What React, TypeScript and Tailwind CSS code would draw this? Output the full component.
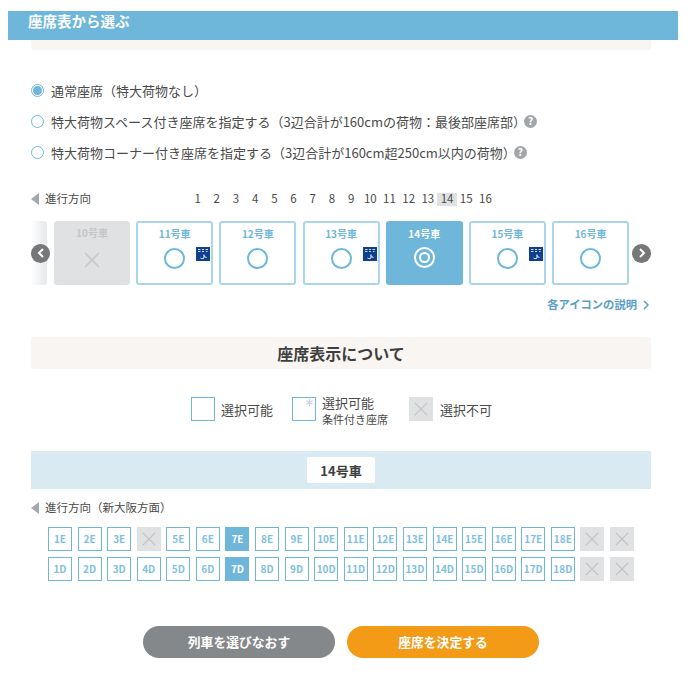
const font = '"Noto Sans CJK JP", "Noto Sans", sans-serif';

function Tri() {
  return <span className="inline-block w-0 h-0 border-y-[6px] border-y-transparent border-r-[8px] border-r-[#a4a8ab]" />;
}
function Help() {
  return (
    <span className="ml-[-2px] w-[13px] h-[13px] rounded-full bg-[#a3a6a8] text-white text-[10px] font-bold flex items-center justify-center leading-none">?</span>
  );
}
function Radio({ on, children }: { on?: boolean; children: React.ReactNode }) {
  return (
    <div className="flex items-center h-[20px]">
      <span className="w-[13px] h-[13px] rounded-full border border-[#6eb7da] flex items-center justify-center shrink-0 mr-[7px]">
        {on && <span className="w-[9px] h-[9px] rounded-full bg-[#6eb7da]" />}
      </span>
      {children}
    </div>
  );
}
function Cross({ s = 16, c = "#c4c6c8", w = 1.6 }: { s?: number; c?: string; w?: number }) {
  return (
    <svg width={s} height={s} viewBox="0 0 16 16">
      <path d="M1 1L15 15M15 1L1 15" stroke={c} strokeWidth={w} fill="none" />
    </svg>
  );
}
function Luggage() {
  return (
    <svg width="14" height="14" viewBox="0 0 14 14" className="absolute left-[58px] top-[24px]">
      <rect width="14" height="14" fill="#0f3f8f" />
      <path d="M2 2.5h2.5M2 4.5h2.5M6 2.5h2M6 4.5h2M9.5 2.5h2.5M10 4.5h1.5" stroke="#fff" strokeWidth="1" opacity="0.8" />
      <path d="M8 7.5v3.5M8 11c-1 .8-2.5.8-3.5 0M8 8.5l2.5 2.5" stroke="#fff" strokeWidth="1" fill="none" />
    </svg>
  );
}
function Car({ n, lug, state }: { n: number; lug?: boolean; state?: "off" | "on" }) {
  if (state === "off")
    return (
      <div className="relative w-[76px] h-[64px] rounded-[3px] bg-[#dfe1e3] flex flex-col items-center shrink-0">
        <span className="text-[10px] leading-none font-bold text-[#c4c6c8] mt-[7px]">{n}号車</span>
        <span className="mt-[14px]"><Cross /></span>
      </div>
    );
  if (state === "on")
    return (
      <div className="relative w-[77px] h-[64px] rounded-[3px] bg-[#6eb7da] flex flex-col items-center shrink-0">
        <span className="text-[10px] leading-none font-bold text-white mt-[8px]">{n}号車</span>
        <span className="mt-[8px] w-[21px] h-[21px] rounded-full border-2 border-white flex items-center justify-center">
          <span className="w-[11px] h-[11px] rounded-full border-2 border-white" />
        </span>
      </div>
    );
  return (
    <div className="relative w-[77px] h-[64px] rounded-[3px] bg-white border-2 border-[#a9d6eb] flex flex-col items-center shrink-0">
      <span className="text-[10px] leading-none font-bold text-[#6eb7da] mt-[6px]">{n}号車</span>
      <span className="mt-[9px] w-[21px] h-[21px] rounded-full border-2 border-[#6eb7da]" />
      {lug && <Luggage />}
    </div>
  );
}
function Arrow({ right }: { right?: boolean }) {
  return (
    <span className="w-[19px] h-[19px] rounded-full bg-[#757779] flex items-center justify-center shrink-0">
      <svg width="8" height="10" viewBox="0 0 8 10">
        <path d={right ? "M2 1l4 4-4 4" : "M6 1L2 5l4 4"} stroke="#fff" strokeWidth="2" fill="none" />
      </svg>
    </span>
  );
}
function Seat({ label, sel }: { label: string | null; sel?: boolean }) {
  if (label === null)
    return (
      <span className="w-[24px] h-[24px] bg-[#dfe1e3] flex items-center justify-center">
        <Cross s={14} c="#c0c2c4" />
      </span>
    );
  return (
    <span
      className={
        "w-[24px] h-[24px] flex items-center justify-center text-[10px] font-bold leading-none border " +
        (sel ? "bg-[#6eb7da] border-[#6eb7da] text-white" : "bg-white border-[#6eb7da] text-[#7fc0df]")
      }
    >
      {label}
    </span>
  );
}
function SeatRow({ row }: { row: "E" | "D" }) {
  const cells: (string | null)[] = [];
  for (let i = 1; i <= 18; i++) cells.push(row === "E" && i === 4 ? null : `${i}${row}`);
  cells.push(null, null);
  return (
    <div className="flex justify-between w-[586px]">
      {cells.map((c, i) => (
        <Seat key={i} label={c} sel={c === `7${row}`} />
      ))}
    </div>
  );
}

export default function App() {
  const nums = Array.from({ length: 16 }, (_, i) => i + 1);
  return (
    <div className="w-[698px] h-[679px] bg-white overflow-hidden text-[#4a4a4a] pt-[11px]" style={{ fontFamily: font }}>
      <div className="ml-[8px] w-[670px] h-[29px] bg-[#6eb7da] text-white font-bold text-[14.5px] leading-none pl-[20px] pt-[3px]">
        座席表から選ぶ
      </div>
      <div className="ml-[31px] w-[620px] h-[10px] bg-[#f9f5f2] rounded-b-[3px]" />

      <div className="ml-[31px] mt-[30px] flex flex-col gap-[11px] text-[13px] leading-none">
        <Radio on>通常座席（特大荷物なし）</Radio>
        <Radio>
          特大荷物スペース付き座席を指定する（3辺合計が160cmの荷物：最後部座席部）<Help />
        </Radio>
        <Radio>
          特大荷物コーナー付き座席を指定する（3辺合計が160cm超250cm以内の荷物）<Help />
        </Radio>
      </div>

      <div className="ml-[31px] mt-[27px] h-[20px] flex items-center text-[11.5px] leading-none">
        <Tri />
        <span className="ml-[6px] w-[143px] shrink-0">進行方向</span>
        <div className="flex">
          {nums.map((n) => (
            <span key={n} className={"w-[19.2px] h-[13px] flex items-center justify-center " + (n === 14 ? "bg-[#dfe1e3]" : "")}>
              {n}
            </span>
          ))}
        </div>
      </div>

      <div className="relative ml-[31px] w-[620px] mt-[12px] h-[64px] flex items-center">
        <div className="absolute left-0 top-0 h-[64px] w-[16px] rounded-r-[3px] bg-gradient-to-r from-white to-[#e6e8ea]" />
        <span className="relative z-10"><Arrow /></span>
        <div className="flex gap-[6.2px] ml-[4px]">
          <Car n={10} state="off" />
          <Car n={11} lug />
          <Car n={12} />
          <Car n={13} lug />
          <Car n={14} state="on" />
          <Car n={15} lug />
          <Car n={16} />
        </div>
        <span className="ml-auto"><Arrow right /></span>
      </div>

      <div className="ml-[31px] w-[620px] mt-[11px] h-[17px] flex items-center justify-end text-[11.3px] leading-none font-bold text-[#5b9fc4]">
        各アイコンの説明
        <svg width="8" height="10" viewBox="0 0 8 10" className="ml-[5px] mr-[1px]">
          <path d="M2 1l4 4-4 4" stroke="#5b9fc4" strokeWidth="1.5" fill="none" />
        </svg>
      </div>

      <div className="ml-[31px] w-[620px] mt-[24px] h-[32px] rounded-[3px] bg-[#f9f5f2] flex items-center justify-center text-[16px] font-bold leading-none text-[#3f3f3f]">
        座席表示について
      </div>

      <div className="mt-[28px] h-[24px] flex items-center pl-[191px] text-[13px] leading-none">
        <span className="w-[24px] h-[24px] border border-[#6eb7da] shrink-0" />
        <span className="ml-[6px]">選択可能</span>
        <span className="relative ml-[19px] w-[24px] h-[24px] border border-[#6eb7da] shrink-0">
          <svg width="7" height="7" viewBox="0 0 8 8" className="absolute right-[2px] top-[1px]">
            <path d="M4 0v8M0.5 2l7 4M7.5 2l-7 4" stroke="#c4d0e8" strokeWidth="1.4" />
          </svg>
        </span>
        <span className="ml-[6px] flex flex-col mt-[3px]">
          <span>選択可能</span>
          <span className="text-[11px] mt-[5px]">条件付き座席</span>
        </span>
        <span className="ml-[21px] w-[24px] h-[24px] bg-[#dfe1e3] flex items-center justify-center shrink-0">
          <Cross s={14} />
        </span>
        <span className="ml-[7px]">選択不可</span>
      </div>

      <div className="ml-[31px] w-[620px] mt-[30px] h-[38px] bg-[#d9eaf3] flex items-center justify-center">
        <span className="w-[68px] h-[26px] bg-white rounded-[2px] flex items-center justify-center text-[13px] font-bold leading-none text-[#3f3f3f]">
          14号車
        </span>
      </div>

      <div className="ml-[31px] mt-[11px] h-[16px] flex items-center text-[11.5px] leading-none">
        <Tri />
        <span className="ml-[6px]">進行方向（新大阪方面）</span>
      </div>

      <div className="ml-[48px] mt-[11px] flex flex-col gap-[6px]">
        <SeatRow row="E" />
        <SeatRow row="D" />
      </div>

      <div className="mt-[45px] pl-[143px] flex gap-[12px]">
        <button className="w-[192px] h-[32px] rounded-full bg-[#85888a] text-white text-[12.8px] font-bold leading-none flex items-center justify-center">
          列車を選びなおす
        </button>
        <button className="w-[192px] h-[32px] rounded-full bg-[#f39a17] text-white text-[12.8px] font-bold leading-none flex items-center justify-center">
          座席を決定する
        </button>
      </div>
    </div>
  );
}
